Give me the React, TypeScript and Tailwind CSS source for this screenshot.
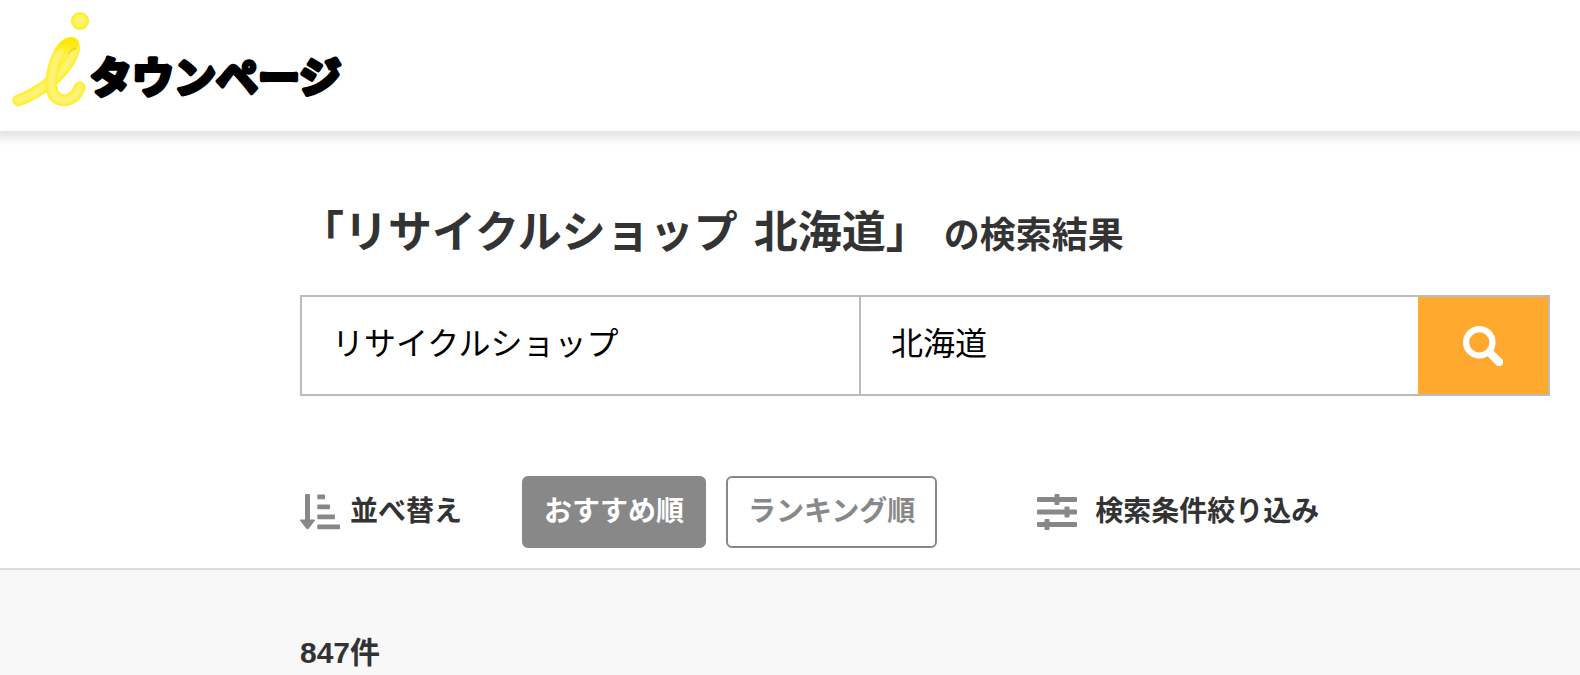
import { useState } from "react";
import type { FormEvent } from "react";

type SortKey = "recommend" | "ranking";

const SORT_OPTIONS: { key: SortKey; label: string }[] = [
  { key: "recommend", label: "おすすめ順" },
  { key: "ranking", label: "ランキング順" },
];

// Stacked strokes, dark edge to light core, give the tube its rounded look
const TUBE_LAYERS = [
  { width: 36, color: "#ffee3c" },
  { width: 32, color: "#ffef2e" },
  { width: 28, color: "#fff042" },
  { width: 23, color: "#fff156" },
  { width: 17, color: "#fff268" },
  { width: 10, color: "#fff47a" },
];

function Tube({ d }: { d: string }) {
  return (
    <g fill="none" strokeLinecap="round" strokeLinejoin="round">
      {TUBE_LAYERS.map((l) => (
        <path key={l.width} d={d} stroke={l.color} strokeWidth={l.width} />
      ))}
    </g>
  );
}

function LogoMark() {
  return (
    <svg viewBox="36 30 234 294" className="h-[98px] w-[78px] shrink-0" aria-hidden="true">
      <defs>
        <radialGradient id="dot">
          <stop offset="0" stopColor="#fff58c" />
          <stop offset="0.6" stopColor="#fff25a" />
          <stop offset="1" stopColor="#ffec14" />
        </radialGradient>
        <linearGradient id="loopTop" x1="0" y1="0" x2="0" y2="1">
          <stop offset="0" stopColor="#ffe900" />
          <stop offset="1" stopColor="#ffe900" stopOpacity="0" />
        </linearGradient>
      </defs>
      <circle cx="240" cy="63" r="27" fill="url(#dot)" />
      <Tube d="M55 301 C90 289 125 266 152 245 C184 222 219 176 223 142" />
      <Tube d="M219 130 C204 124 184 142 170 176 C154 214 149 258 160 281 C173 309 222 310 239 262" />
      <path
        d="M219 130 C206 124 190 136 177 161"
        fill="none"
        stroke="url(#loopTop)"
        strokeWidth="32"
        strokeLinecap="round"
      />
      <path d="M204 158 Q216 142 232 142 L228 150 Q214 152 203 166Z" fill="#e8d400" opacity="0.7" />
    </svg>
  );
}

function Wordmark() {
  return (
    <svg viewBox="0 0 264 68" className="h-[68px] w-[264px] shrink-0" role="img" aria-label="タウンページ">
      <text
        x="0"
        y="53"
        fontSize="42"
        fontWeight="700"
        fontFamily="'Noto Sans CJK JP', sans-serif"
        fill="#000"
        stroke="#000"
        strokeWidth="4"
        strokeLinejoin="round"
      >
        タウンページ
      </text>
    </svg>
  );
}

function SearchIcon() {
  return (
    <svg viewBox="0 0 40 40" className="h-10 w-10" aria-hidden="true">
      <circle cx="16.3" cy="16.3" r="13.2" fill="none" stroke="#fff" strokeWidth="6.2" />
      <rect x="24.500" y="29" width="17" height="8" rx="2" fill="#fff" transform="rotate(45 33 33)" />
    </svg>
  );
}

function SortIcon() {
  return (
    <svg viewBox="0 0 40 36" className="h-9 w-10 shrink-0" fill="#888" aria-hidden="true">
      <rect x="5" y="0" width="5" height="28" rx="1" />
      <path d="M1 25.5h13q1.800 0 .6 1.400l-5.800 7.600q-1.300 1.500-2.600 0L.4 26.900q-1.200-1.400.6-1.400z" />
      <rect x="17.300" y="0.500" width="7.700" height="4.700" rx="0.700" />
      <rect x="17.300" y="10.500" width="12.700" height="4.700" rx="0.700" />
      <rect x="17.300" y="20.500" width="17.700" height="4.700" rx="0.700" />
      <rect x="17.300" y="30.500" width="22.700" height="4.700" rx="0.700" />
    </svg>
  );
}

function FilterIcon() {
  return (
    <svg viewBox="0 0 40 36" className="h-9 w-10 shrink-0" fill="#888" aria-hidden="true">
      <rect x="0" y="3" width="40" height="5" rx="1" />
      <rect x="17.500" y="0" width="5" height="11" rx="1" />
      <rect x="0" y="15.500" width="40" height="5" rx="1" />
      <rect x="27.500" y="12.500" width="5" height="11" rx="1" />
      <rect x="0" y="28" width="40" height="5" rx="1" />
      <rect x="7.500" y="25" width="5" height="11" rx="1" />
    </svg>
  );
}

export default function App() {
  const [keyword, setKeyword] = useState("リサイクルショップ");
  const [area, setArea] = useState("北海道");
  const [sort, setSort] = useState<SortKey>("recommend");

  const onSubmit = (e: FormEvent) => {
    e.preventDefault();
  };

  return (
    <div className="flex min-h-screen flex-col bg-white font-['Liberation_Sans','Noto_Sans_CJK_JP',sans-serif] text-[#333]">
      <header className="bg-white px-3 pt-2.5 pb-[23px] shadow-[0_4px_8px_4px_rgba(0,0,0,0.1)]">
        <a href="#" className="flex w-fit items-end">
          <LogoMark />
          <Wordmark />
        </a>
      </header>

      <main className="flex flex-1 flex-col">
        <section className="border-b-2 border-[#ddd] pt-[66px] pr-[30px] pb-5 pl-[300px]">
          <h1 className="flex items-baseline text-[44px] leading-[72px] font-bold whitespace-nowrap">
            <span className="mr-4">「リサイクルショップ</span>
            <span className="mr-3.5">北海道」</span>
            <span className="text-[36px]">の検索結果</span>
          </h1>

          <form onSubmit={onSubmit} className="mt-[23px] flex h-[101px] border-2 border-[#bbb]">
            <input
              type="text"
              aria-label="キーワード"
              value={keyword}
              onChange={(e) => setKeyword(e.target.value)}
              className="min-w-0 flex-1 border-r-2 border-[#bbb] px-[30px] pb-1 text-[32px] text-black outline-none"
            />
            <input
              type="text"
              aria-label="エリア"
              value={area}
              onChange={(e) => setArea(e.target.value)}
              className="min-w-0 flex-1 px-[30px] pb-1 text-[32px] text-black outline-none"
            />
            <button
              type="submit"
              aria-label="検索"
              className="flex w-[130px] shrink-0 items-center justify-center bg-[#ffa92f]"
            >
              <SearchIcon />
            </button>
          </form>

          <div className="mt-20 flex items-center text-[28px] font-bold whitespace-nowrap">
            <div className="flex w-[222px] items-center gap-2.5">
              <SortIcon />
              <span>並べ替え</span>
            </div>
            <div className="flex gap-5">
              {SORT_OPTIONS.map(({ key, label }) => (
                <button
                  key={key}
                  type="button"
                  aria-pressed={sort === key}
                  onClick={() => setSort(key)}
                  className={
                    sort === key
                      ? "h-[72px] rounded-md border-2 border-[#888] bg-[#888] px-5 text-white"
                      : "h-[72px] rounded-md border-2 border-[#888] bg-white px-5 text-[#888]"
                  }
                >
                  {label}
                </button>
              ))}
            </div>
            <button type="button" className="ml-[100px] flex items-center gap-[18px]">
              <FilterIcon />
              <span>検索条件絞り込み</span>
            </button>
          </div>
        </section>

        <section className="flex-1 bg-[#f8f8f8] pt-[60px] pr-[30px] pl-[300px]">
          <p className="text-[30px] leading-[45px] font-bold">847件</p>
        </section>
      </main>
    </div>
  );
}
